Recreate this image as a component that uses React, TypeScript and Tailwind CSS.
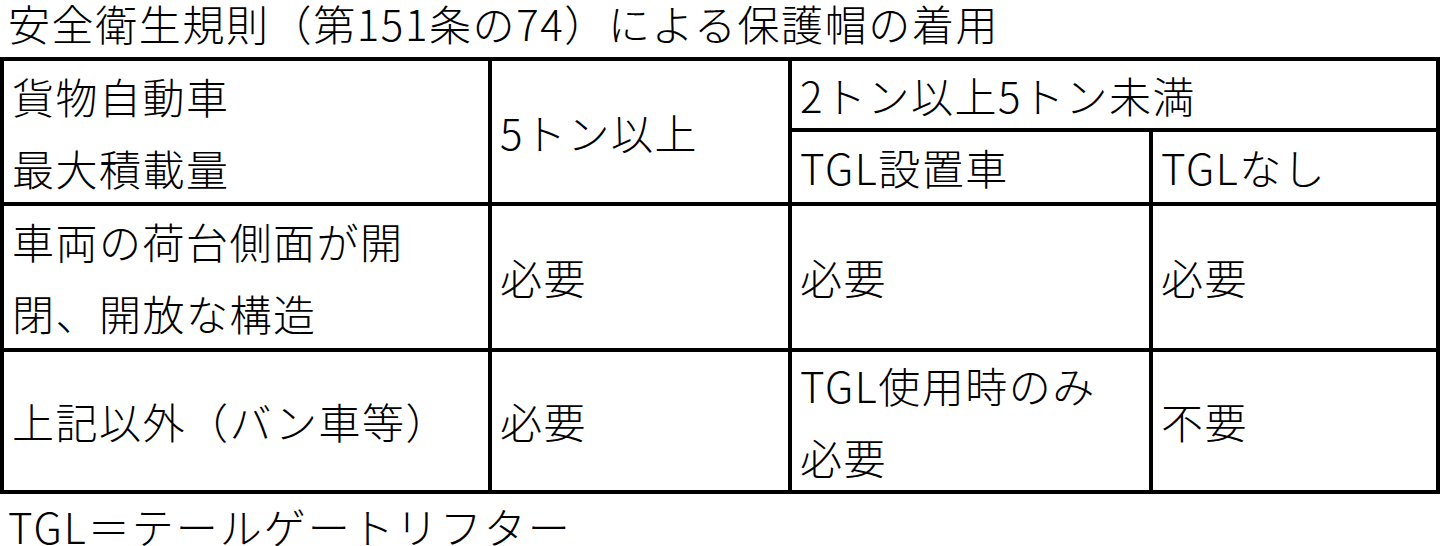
export default function App() {
  const font = { fontFamily: '"Noto Sans CJK JP", "Noto Sans", sans-serif' };
  const cell = "bg-white flex items-center pl-[8px] text-[42px] leading-[72px] tracking-[1.5px] font-light text-black";

  return (
    <div className="w-[1440px] h-[546px] overflow-hidden bg-white text-black" style={font}>
      <div className="pl-[8px] h-[57px] text-[42px] leading-[46px] tracking-[1.6px] font-light">
        安全衛生規則（第151条の74）による保護帽の着用
      </div>
      <div className="grid grid-cols-[484px_296px_357px_283px] grid-rows-[67px_70px_142px_138px] gap-[4px] p-[4px] bg-black">
        <div className={`${cell} row-span-2`}>
          <div>
            貨物自動車
            <br />
            最大積載量
          </div>
        </div>
        <div className={`${cell} row-span-2`}>5トン以上</div>
        <div className={`${cell} col-span-2`}>2トン以上5トン未満</div>
        <div className={cell}>TGL設置車</div>
        <div className={cell}>TGLなし</div>

        <div className={cell}>
          <div>
            車両の荷台側面が開
            <br />
            閉、開放な構造
          </div>
        </div>
        <div className={cell}>必要</div>
        <div className={cell}>必要</div>
        <div className={cell}>必要</div>

        <div className={cell}>上記以外（バン車等）</div>
        <div className={cell}>必要</div>
        <div className={cell}>
          <div>
            TGL使用時のみ
            <br />
            必要
          </div>
        </div>
        <div className={cell}>不要</div>
      </div>
      <div className="pl-[8px] pt-[12px] text-[42px] leading-[40px] tracking-[2px] font-light">
        TGL＝テールゲートリフター
      </div>
    </div>
  );
}
